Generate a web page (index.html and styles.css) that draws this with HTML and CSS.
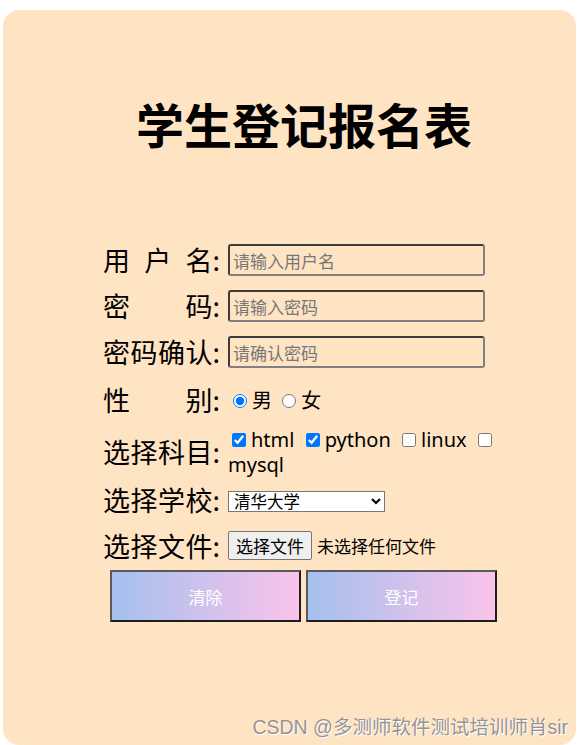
FILE: index.html
```html
<!DOCTYPE html>
<html lang="zh-CN">
<head>
<meta charset="utf-8">
<title>学生登记报名表</title>
<link rel="stylesheet" href="styles.css">
</head>
<body>
<div class="panel">
  <h1 class="title">学生登记报名表</h1>
  <form class="form">
    <div class="row r1">
      <label class="lbl"><span class="t">用 户 名</span>:</label>
      <div class="ctl"><input class="txt" type="text" placeholder="请输入用户名"></div>
    </div>
    <div class="row r2">
      <label class="lbl"><span class="t">密 码</span>:</label>
      <div class="ctl"><input class="txt" type="password" placeholder="请输入密码"></div>
    </div>
    <div class="row r3">
      <label class="lbl"><span class="t">密码确认</span>:</label>
      <div class="ctl"><input class="txt" type="password" placeholder="请确认密码"></div>
    </div>
    <div class="row r4">
      <label class="lbl"><span class="t">性 别</span>:</label>
      <div class="ctl opts"><input class="rd" type="radio" name="sex" checked>男 <input class="rd" type="radio" name="sex">女</div>
    </div>
    <div class="row r5">
      <label class="lbl"><span class="t">选择科目</span>:</label>
      <div class="ctl opts checks"><input class="cb cb1" type="checkbox" checked>html <input class="cb" type="checkbox" checked>python <input class="cb" type="checkbox">linux <input class="cb" type="checkbox">mysql</div>
    </div>
    <div class="row r6">
      <label class="lbl"><span class="t">选择学校</span>:</label>
      <div class="ctl">
        <select class="sel">
          <option>清华大学</option>
          <option>北京大学</option>
        </select>
      </div>
    </div>
    <div class="row r7">
      <label class="lbl"><span class="t">选择文件</span>:</label>
      <div class="ctl file"><button type="button" class="fbtn">选择文件</button><span class="fname">未选择任何文件</span></div>
    </div>
    <div class="btns">
      <button type="reset" class="btn">清除</button>
      <button type="button" class="btn">登记</button>
    </div>
  </form>
  <div class="wm">CSDN @多测师软件测试培训师肖sir</div>
</div>
</body>
</html>
```

FILE: styles.css
```css
html, body {
  margin: 0;
  background: #ffffff;
  font-family: "Noto Sans", "Noto Sans CJK SC", sans-serif;
  color: #000;
}

.panel {
  position: relative;
  box-sizing: border-box;
  margin: 10px 8px 0 3px;
  height: 735px;
  padding: 0 76px 0 100px;
  background: #ffe4c4;
  border-radius: 16px;
  overflow: hidden;
}

.title {
  margin: 83px 0 0;
  padding-left: 5px;
  font-family: "Noto Sans CJK SC", sans-serif;
  font-size: 48px;
  line-height: 60px;
  font-weight: bold;
  text-align: center;
}

.form {
  margin-top: 84px;
  display: flex;
  flex-direction: column;
}

.row {
  display: flex;
  align-items: center;
  gap: 8px;
}

.r1, .r2, .r3 { height: 46px; }
.r4 { height: 50px; }
.r5 { height: 54px; }
.r6 { height: 42px; }
.r7 { height: 49px; }

.lbl {
  flex: none;
  width: 117px;
  display: flex;
  font-family: "Noto Sans CJK SC", sans-serif;
  font-size: 27px;
  line-height: 32px;
}

.lbl .t {
  flex: 1;
  text-align: justify;
  text-align-last: justify;
}

.ctl {
  flex: 1;
  min-width: 0;
  font-size: 20px;
}

.txt {
  box-sizing: border-box;
  width: 257px;
  height: 32px;
  margin: 0;
  padding: 0 3px;
  border: 2px solid;
  border-color: #3c3c3c #808080 #808080 #3c3c3c;
  border-radius: 3px;
  background: transparent;
  font-family: "Noto Sans CJK SC", sans-serif;
  font-size: 17px;
}

.txt::placeholder {
  color: #777777;
}

.opts {
  font-family: "Noto Sans", "Noto Sans CJK SC", sans-serif;
  font-size: 20px;
  line-height: 25px;
}

.rd {
  width: 14px;
  height: 14px;
  margin: 3px 5px 0 5px;
}

.cb {
  width: 14px;
  height: 14px;
  margin: 3px 5px 3px 6px;
}

.cb1 {
  margin-left: 4px;
}

.sel {
  box-sizing: border-box;
  width: 157px;
  height: 21px;
  margin: 0;
  padding: 0 1px;
  border: 1px solid #767676;
  border-radius: 0;
  background: #ffffff;
  font-family: "Liberation Sans", "Noto Sans CJK SC", sans-serif;
  font-size: 16.5px;
  color: #000;
}

.file {
  display: flex;
  align-items: center;
  font-family: "Noto Sans CJK SC", sans-serif;
  font-size: 17px;
}

.fbtn {
  height: 29px;
  margin: 0 5px 0 0;
  padding: 0 7px;
  border: 1px solid #767676;
  border-radius: 2px;
  background: #efefef;
  font-family: "Noto Sans CJK SC", sans-serif;
  font-size: 17px;
  color: #000;
}

.btns {
  display: flex;
  gap: 5px;
  padding-left: 7px;
}

.btn {
  box-sizing: border-box;
  width: 191px;
  height: 52px;
  margin: 0;
  border: 2px solid;
  border-color: #5a5a5a #1e1e1e #1e1e1e #5a5a5a;
  background: linear-gradient(to right, #a5c0ee, #fac3ea);
  color: #ffffff;
  font-family: "Noto Sans CJK SC", sans-serif;
  font-size: 17px;
}

.wm {
  position: absolute;
  right: 8px;
  bottom: 6px;
  font-family: "Liberation Sans", "Noto Sans CJK SC", sans-serif;
  font-size: 19.5px;
  line-height: 24px;
  color: #949494;
  text-shadow: 1px 1px 0 #ffffff;
}
```
